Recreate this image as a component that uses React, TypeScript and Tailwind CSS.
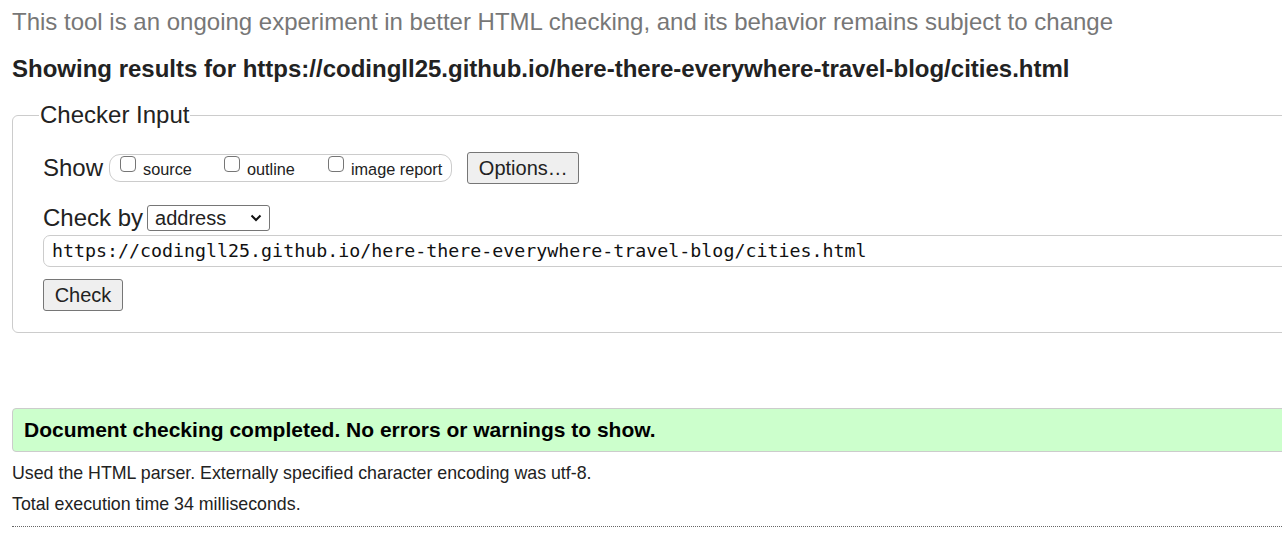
import React from "react";

function Box() {
  return <span className="inline-block w-[16px] h-[16px] border border-[#767676] rounded-[4px] bg-white shrink-0 -translate-y-[4px]" />;
}

export default function App() {
  return (
    <div className="w-[1282px] h-[534px] overflow-hidden bg-white" style={{ fontFamily: '"Liberation Sans", Arial, sans-serif' }}>
      <div className="w-[1330px] pl-[12px] text-[#222]">
        <p className="pt-[8px] text-[24px] leading-[28px] text-[#777]">
          This tool is an ongoing experiment in better HTML checking, and its behavior remains subject to change
        </p>
        <h2 className="mt-[19px] text-[24px] leading-[28px] font-bold text-[#222]">
          Showing results for https://codingll25.github.io/here-there-everywhere-travel-blog/cities.html
        </h2>
        <fieldset className="mt-[18px] border border-[#cccccc] rounded-[6px] pl-[30px] pb-[21px]">
          <legend className="ml-[-4px] px-[1px] text-[24px] leading-[28px] text-[#222]">Checker Input</legend>
          <div className="mt-[23px] flex items-center h-[32px]">
            <span className="text-[24px] leading-[28px]">Show</span>
            <span className="ml-[6px] flex items-center h-[28px] border border-[#cccccc] rounded-[11px] pl-[10px] pr-[9px] text-[16.3px]">
              <span className="flex items-center"><Box /><span className="ml-[7px] mt-[2px]">source</span></span>
              <span className="ml-[32px] flex items-center"><Box /><span className="ml-[7px] mt-[2px]">outline</span></span>
              <span className="ml-[33px] flex items-center"><Box /><span className="ml-[7px] mt-[2px]">image report</span></span>
            </span>
            <span className="ml-[15px] flex items-center justify-center w-[112px] h-[32px] bg-[#efefef] border border-[#767676] rounded-[3px] text-[20px]">
              Options…
            </span>
          </div>
          <div className="mt-[21px] flex items-center h-[26px]">
            <span className="text-[24px] leading-[28px]">Check by</span>
            <span className="ml-[4px] flex items-center w-[123px] h-[26px] border border-[#767676] rounded-[3px] pl-[7px] pr-[6px] text-[20px]">
              <span className="flex-1">address</span>
              <svg width="12" height="8" viewBox="0 0 12 8" className="mr-[1px]">
                <path d="M1.5 1.5 L6 6 L10.5 1.5" fill="none" stroke="#111" strokeWidth="2" />
              </svg>
            </span>
          </div>
          <div className="mt-[4px] h-[32px] border border-[#cccccc] rounded-[7px] flex items-center pl-[8px] text-[18.3px] text-[#111]" style={{ fontFamily: '"DejaVu Sans Mono", monospace' }}>
            https://codingll25.github.io/here-there-everywhere-travel-blog/cities.html
          </div>
          <div className="mt-[12px] flex">
            <span className="flex items-center justify-center w-[80px] h-[32px] bg-[#efefef] border border-[#767676] rounded-[3px] text-[20px]">
              Check
            </span>
          </div>
        </fieldset>
        <div className="mt-[75px] h-[44px] bg-[#ccffcc] border border-[#cccccc] rounded-[4px] flex items-center pl-[11px] text-[21px] font-bold text-black">
          Document checking completed. No errors or warnings to show.
        </div>
        <p className="mt-[11px] text-[17.8px] leading-[20px] text-[#222]">
          Used the HTML parser. Externally specified character encoding was utf-8.
        </p>
        <p className="mt-[11px] text-[17.8px] leading-[20px] text-[#222]">Total execution time 34 milliseconds.</p>
        <div className="mt-[12px] w-[1270px] border-t border-dotted border-[#666]" />
      </div>
    </div>
  );
}
